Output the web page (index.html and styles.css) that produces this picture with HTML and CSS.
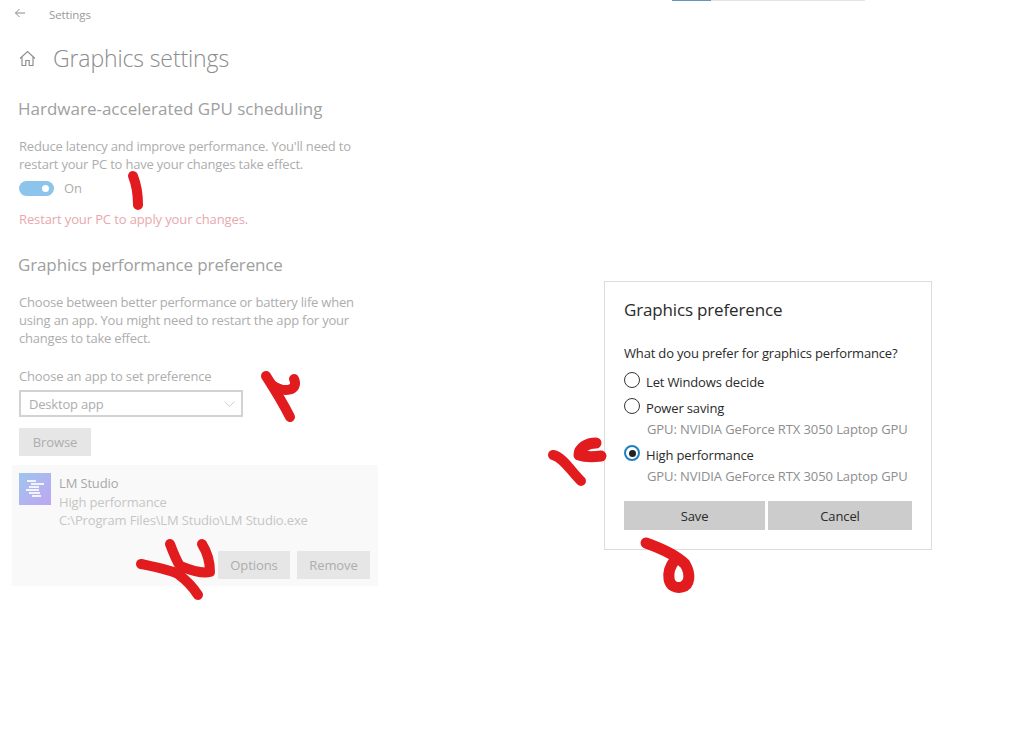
FILE: index.html
```html
<!DOCTYPE html>
<html lang="en">
<head>
	<meta charset="UTF-8">
	<title>Graphics settings</title>
	<link rel="stylesheet" href="styles.css">
</head>
<body>
	<div class="page">

		<!-- SETTINGS PANEL -->
		<div class="settings">
			<div class="topbar">
				<svg class="back" width="12" height="12" viewBox="0 0 12 12"><path d="M11 6H1.5M5.5 2L1.5 6l4 4" fill="none" stroke="#8c8c8c" stroke-width="1"/></svg>
				<span>Settings</span>
			</div>
			<div class="title-row">
				<svg width="17" height="17" viewBox="0 0 17 17"><path d="M1 8.5L8.5 1.5 16 8.5M3 7v8.5h3.8V10.5h3.4v5H14V7" fill="none" stroke="#8f8f8f" stroke-width="1.2"/></svg>
				<h1>Graphics settings</h1>
			</div>
			<h2 class="first">Hardware-accelerated GPU scheduling</h2>
			<p class="text">Reduce latency and improve performance. You'll need to<br>restart your PC to have your changes take effect.</p>
			<div class="toggle-row">
				<span class="toggle"></span>
				<span>On</span>
			</div>
			<p class="warn">Restart your PC to apply your changes.</p>
			<h2 class="second">Graphics performance preference</h2>
			<p class="text">Choose between better performance or battery life when<br>using an app. You might need to restart the app for your<br>changes to take effect.</p>
			<p class="text label">Choose an app to set preference</p>
			<div class="select">
				<span>Desktop app</span>
				<svg width="11" height="6" viewBox="0 0 11 6"><path d="M.5.5l5 5 5-5" fill="none" stroke="#d0d0d0"/></svg>
			</div>
			<button class="btn browse">Browse</button>
			<div class="app-item">
				<div class="app-info">
					<svg class="app-icon" width="32" height="32" viewBox="0 0 32 32">
						<defs>
							<linearGradient id="lm" x1="0" y1="0" x2="1" y2="1">
								<stop offset="0" stop-color="#9fc6ee"/>
								<stop offset="1" stop-color="#bfa6f2"/>
							</linearGradient>
						</defs>
						<rect width="32" height="32" fill="url(#lm)"/>
						<path d="M8 8h9M12 11h13M10 14h10M7 17h13M10 20h11M13 23h9" stroke="#f5f2ff" stroke-width="2"/>
					</svg>
					<div class="app-text">
						<div class="app-name">LM Studio</div>
						<div>High performance</div>
						<div>C:\Program Files\LM Studio\LM Studio.exe</div>
					</div>
				</div>
				<div class="app-actions">
					<button class="btn">Options</button>
					<button class="btn remove">Remove</button>
				</div>
			</div>
		</div>

		<!-- RIGHT SIDE -->
		<div class="right">
			<div class="top-line"><span></span></div>
			<div class="dialog">
				<h3>Graphics preference</h3>
				<p class="question">What do you prefer for graphics performance?</p>
				<div class="option first-option"><span class="radio"></span>Let Windows decide</div>
				<div class="option second-option"><span class="radio"></span>Power saving</div>
				<div class="gpu">GPU: NVIDIA GeForce RTX 3050 Laptop GPU</div>
				<div class="option third-option"><span class="radio on"></span>High performance</div>
				<div class="gpu">GPU: NVIDIA GeForce RTX 3050 Laptop GPU</div>
				<div class="dialog-buttons">
					<button class="save">Save</button>
					<button class="cancel">Cancel</button>
				</div>
			</div>
		</div>

		<!-- RED MARKER NUMBERS -->
		<svg class="marks" width="1024" height="738" viewBox="0 0 1024 738">
			<g fill="none" stroke="#e21b1f" stroke-width="10" stroke-linecap="round" stroke-linejoin="round">
				<path d="M133 176C137 186 138 195 138 205"/>
				<path d="M266 376C275 390 283 403 290 417"/>
				<path d="M272 385C285 394 299 390 294 379"/>
				<path d="M141 564C155 567 170 570 178 574C186 580 193 587 198 595"/>
				<path d="M170 544C173 552 176 560 180 566C190 570 202 574 210 572C210 562 207 552 202 544"/>
				<path d="M553 455C563 457 570 470 581 481"/>
				<path stroke-width="11" d="M596 443C587 443 579 448 579 455C585 457 593 457 601 456"/>
				<path stroke-width="11" d="M646 543C660 548 676 555 685 564C691 574 690 585 682 587C675 589 670 585 669 579C668 572 670 566 675 560"/>
			</g>
		</svg>
	</div>
</body>
</html>
```

FILE: styles.css
```css
* {
	margin: 0;
	padding: 0;
	box-sizing: border-box;
	font-family: 'Open Sans', sans-serif;
}

body {
	background: #fff;
}

.page {
	display: flex;
	height: 738px;
	position: relative;
	overflow: hidden;
}

/* SETTINGS PANEL */
.settings {
	width: 604px;
	padding-left: 19px;
	color: #adadad;
	font-size: 13px;
	letter-spacing: -0.2px;
}

.topbar {
	display: flex;
	align-items: center;
	height: 28px;
	font-size: 11.5px;
	letter-spacing: -0.1px;
	color: #9a9a9a;
}

.back {
	margin-left: -5px;
	margin-right: 23px;
	margin-top: -3px;
}

.title-row {
	display: flex;
	align-items: center;
	gap: 17px;
	height: 34px;
	margin-top: 13px;
}

h1 {
	font-size: 23px;
	font-weight: 300;
	color: #8c8c8c;
	letter-spacing: -0.12px;
}

h2 {
	font-size: 17px;
	font-weight: 400;
	color: #a0a0a0;
	letter-spacing: 0;
	line-height: 24px;
	margin-left: -1px;
}

h2.first {
	margin-top: 22px;
}

h2.second {
	margin-top: 25px;
	letter-spacing: -0.13px;
}

.text {
	line-height: 18px;
	margin-top: 16px;
}

.toggle-row {
	display: flex;
	align-items: center;
	gap: 10px;
	margin-top: 7px;
	height: 16px;
}

.toggle {
	width: 35px;
	height: 15px;
	border-radius: 8px;
	background: #8cc4ec;
	position: relative;
}

.toggle::after {
	content: "";
	position: absolute;
	right: 5px;
	top: 4px;
	width: 7px;
	height: 7px;
	border-radius: 50%;
	background: #fff;
}

.warn {
	color: #e8a8ae;
	line-height: 18px;
	margin-top: 14px;
	letter-spacing: -0.12px;
}

.label {
	margin-top: 20px;
	letter-spacing: -0.16px;
}

.select {
	display: flex;
	align-items: center;
	justify-content: space-between;
	width: 224px;
	height: 27px;
	margin-top: 5px;
	padding: 0 6px 0 8px;
	border: 2px solid #d2d2d2;
}

.btn {
	width: 72px;
	height: 28px;
	border: none;
	background: #e6e6e6;
	color: #adadad;
	font-size: 13px;
	letter-spacing: -0.1px;
}

.btn.remove {
	width: 73px;
}

.browse {
	display: block;
	margin-top: 11px;
}

.app-item {
	width: 366px;
	height: 121px;
	margin: 9px 0 0 -7px;
	padding: 8px 8px 7px 7px;
	background: #f9f9f9;
	display: flex;
	flex-direction: column;
	justify-content: space-between;
}

.app-info {
	display: flex;
	gap: 8px;
}

.app-text {
	line-height: 18.5px;
	color: #c6c6c6;
	margin-top: 1px;
	letter-spacing: -0.15px;
}

.app-name {
	color: #a8a8a8;
}

.app-actions {
	display: flex;
	justify-content: flex-end;
	gap: 7px;
}

/* DIALOG */
.right {
	flex: 1;
}

.top-line {
	width: 193px;
	height: 1px;
	margin-left: 68px;
	background: #e4e4e4;
}

.top-line span {
	display: block;
	width: 39px;
	height: 1px;
	background: #5b9bb8;
}

.dialog {
	width: 328px;
	height: 269px;
	margin-top: 280px;
	padding: 15px 19px 0;
	border: 1px solid #dcdcdc;
	color: #2a2a2a;
	font-size: 13px;
	letter-spacing: -0.1px;
}

h3 {
	font-size: 17px;
	font-weight: 400;
	letter-spacing: -0.16px;
	line-height: 26px;
}

.question {
	margin-top: 21px;
	line-height: 18px;
	letter-spacing: -0.17px;
}

.option {
	display: flex;
	align-items: center;
	gap: 6px;
	line-height: 18px;
	letter-spacing: -0.15px;
}

.first-option {
	margin-top: 11px;
}

.second-option {
	margin-top: 8px;
}

.third-option {
	margin-top: 8px;
}

.radio {
	width: 16px;
	height: 16px;
	border: 1.5px solid #333;
	border-radius: 50%;
	margin-top: -4px;
	position: relative;
}

.radio.on {
	border: 2px solid #1f7fbf;
}

.radio.on::after {
	content: "";
	position: absolute;
	left: 2.5px;
	top: 2.5px;
	width: 7px;
	height: 7px;
	border-radius: 50%;
	background: #222;
}

.gpu {
	margin: 3px 0 0 23px;
	line-height: 18px;
	color: #8e8e8e;
}

.dialog-buttons {
	display: flex;
	gap: 3px;
	margin-top: 16px;
}

.dialog-buttons button {
	height: 29px;
	border: none;
	background: #cccccc;
	color: #2a2a2a;
	font-size: 13px;
	letter-spacing: -0.1px;
}

.save {
	width: 141px;
}

.cancel {
	width: 144px;
}

/* MARKER OVERLAY */
.marks {
	position: absolute;
	left: 0;
	top: 0;
	pointer-events: none;
}
```
